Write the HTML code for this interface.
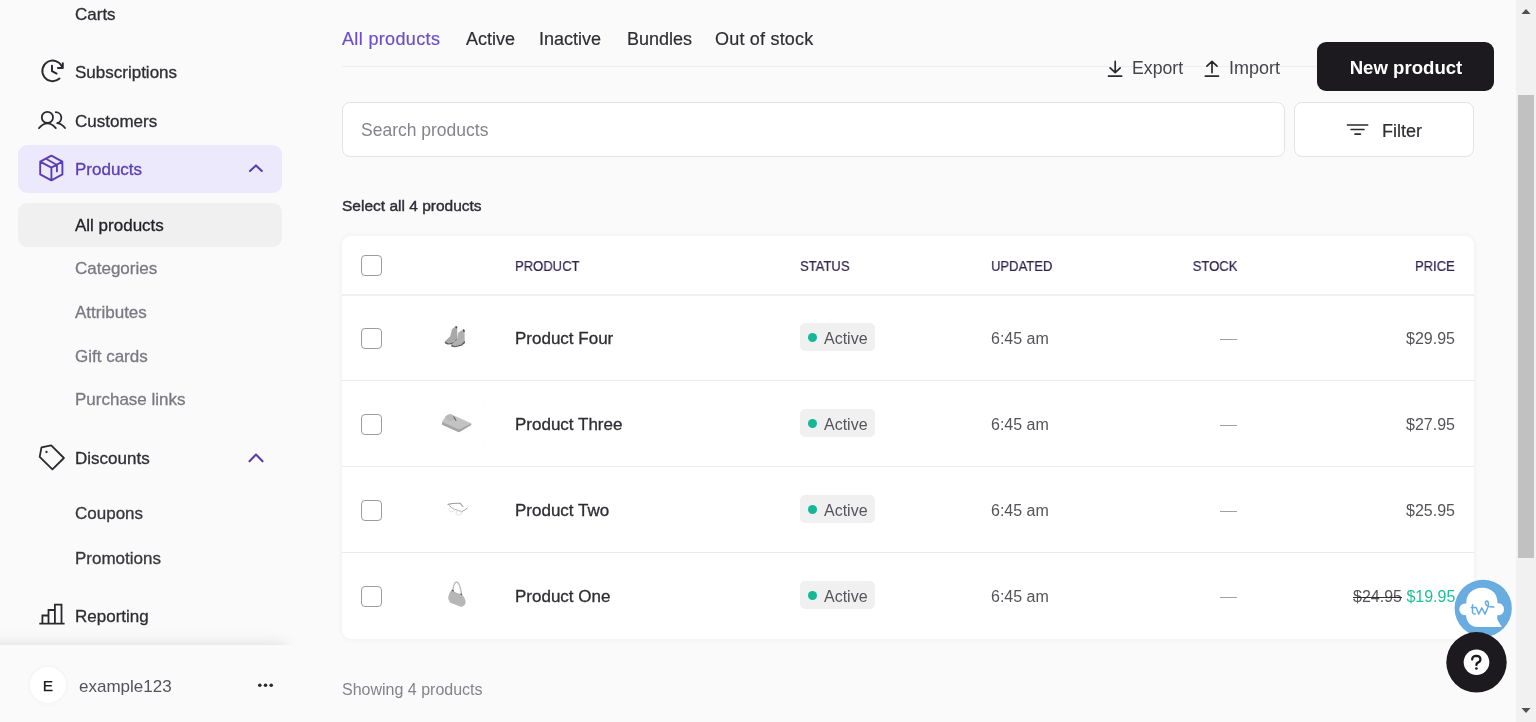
<!DOCTYPE html>
<html><head><meta charset="utf-8"><style>
html,body{margin:0;padding:0;}
body{width:1536px;height:722px;overflow:hidden;background:#fafafa;position:relative;font-family:"Liberation Sans",sans-serif;-webkit-font-smoothing:antialiased;}
.t{position:absolute;line-height:1;white-space:nowrap;will-change:transform;}
.box{position:absolute;box-sizing:border-box;}
.cb{position:absolute;left:361.2px;width:21px;height:21px;box-sizing:border-box;border:1.5px solid #9c9ba1;border-radius:4px;background:#fff;}
.thumb{position:absolute;left:429px;width:56px;height:56px;box-sizing:border-box;border:1px solid #fefefe;border-radius:10px;}
.badge{position:absolute;left:800px;width:75px;height:28px;background:#f0f0f0;border-radius:5px;}
.badge i{position:absolute;left:8px;top:10.3px;width:9px;height:9px;border-radius:50%;background:#14b897;}
.dash{position:absolute;left:1220px;width:17px;height:1.2px;background:#a09fa6;}
.rowline{position:absolute;left:342px;width:1132px;height:1.3px;background:#ebebeb;}
</style></head><body>
<!-- sidebar highlights -->
<div class="box" style="left:18px;top:145px;width:264px;height:48px;background:#ece9fd;border-radius:9px;"></div>
<div class="box" style="left:18px;top:202.5px;width:264px;height:44px;background:#f0f0f0;border-radius:9px;"></div>
<!-- footer shadow -->
<div class="box" style="left:0;top:620px;width:320px;height:25px;overflow:hidden;"><div class="box" style="left:-30px;top:25px;width:316px;height:100px;box-shadow:0 0 15px rgba(0,0,0,0.13);"></div></div>
<div class="box" style="left:30.3px;top:666.8px;width:36px;height:36px;border-radius:50%;background:#fff;box-shadow:0 0 4px rgba(0,0,0,0.06);"></div>
<!-- tabs line -->
<div class="box" style="left:342px;top:65.6px;width:1132px;height:1.2px;background:#eeeeee;"></div>
<!-- new product -->
<div class="box" style="left:1317px;top:42px;width:177px;height:49px;background:#1c1a1f;border-radius:9px;"></div>
<!-- search -->
<div class="box" style="left:342px;top:102px;width:943px;height:55px;background:#fff;border:1px solid #e3e3e3;border-radius:8px;"></div>
<div class="box" style="left:1294px;top:102px;width:180px;height:55px;background:#fff;border:1px solid #e3e3e3;border-radius:8px;"></div>
<!-- card -->
<div class="box" style="left:342px;top:236px;width:1132px;height:402.5px;background:#fff;border-radius:9px;box-shadow:0 0 6px rgba(0,0,0,0.05);"></div>
<div class="box" style="left:342px;top:294px;width:1132px;height:2px;background:#efefef;"></div>
<div class="cb" style="top:255px"></div>
<div class="cb" style="top:327.5px"></div><div class="thumb" style="top:310.0px"></div><div class="badge" style="top:323.0px"><i></i></div><div class="dash" style="top:338.5px"></div><div class="cb" style="top:413.5px"></div><div class="thumb" style="top:396.0px"></div><div class="badge" style="top:409.0px"><i></i></div><div class="dash" style="top:424.5px"></div><div class="rowline" style="top:380.0px"></div><div class="cb" style="top:499.5px"></div><div class="thumb" style="top:482.0px"></div><div class="badge" style="top:495.0px"><i></i></div><div class="dash" style="top:510.5px"></div><div class="rowline" style="top:466.0px"></div><div class="cb" style="top:585.5px"></div><div class="thumb" style="top:568.0px"></div><div class="badge" style="top:581.0px"><i></i></div><div class="dash" style="top:596.5px"></div><div class="rowline" style="top:552.0px"></div>
<div class="t" style="left:74.5px;top:5.61px;font-size:17px;color:#2e2d33;font-weight:normal;-webkit-text-stroke:0.3px #2e2d33;">Carts</div><div class="t" style="left:74.5px;top:64.11px;font-size:17px;color:#2e2d33;font-weight:normal;-webkit-text-stroke:0.3px #2e2d33;">Subscriptions</div><div class="t" style="left:74.5px;top:112.61px;font-size:17px;color:#2e2d33;font-weight:normal;-webkit-text-stroke:0.3px #2e2d33;">Customers</div><div class="t" style="left:74.5px;top:161.21px;font-size:17px;color:#5b3db3;font-weight:normal;-webkit-text-stroke:0.3px #5b3db3;">Products</div><div class="t" style="left:74.5px;top:217.01px;font-size:17px;color:#222126;font-weight:normal;-webkit-text-stroke:0.3px #222126;">All products</div><div class="t" style="left:74.5px;top:259.61px;font-size:17px;color:#7a7982;font-weight:normal;-webkit-text-stroke:0.3px #7a7982;">Categories</div><div class="t" style="left:74.5px;top:304.01px;font-size:17px;color:#7a7982;font-weight:normal;-webkit-text-stroke:0.3px #7a7982;">Attributes</div><div class="t" style="left:74.5px;top:348.01px;font-size:17px;color:#7a7982;font-weight:normal;-webkit-text-stroke:0.3px #7a7982;">Gift cards</div><div class="t" style="left:74.5px;top:391.41px;font-size:17px;color:#7a7982;font-weight:normal;-webkit-text-stroke:0.3px #7a7982;">Purchase links</div><div class="t" style="left:74.5px;top:449.81px;font-size:17px;color:#2e2d33;font-weight:normal;-webkit-text-stroke:0.3px #2e2d33;">Discounts</div><div class="t" style="left:74.5px;top:505.21px;font-size:17px;color:#38373c;font-weight:normal;-webkit-text-stroke:0.3px #38373c;">Coupons</div><div class="t" style="left:74.5px;top:549.61px;font-size:17px;color:#38373c;font-weight:normal;-webkit-text-stroke:0.3px #38373c;">Promotions</div><div class="t" style="left:74.5px;top:608.01px;font-size:17px;color:#2e2d33;font-weight:normal;-webkit-text-stroke:0.3px #2e2d33;">Reporting</div><div class="t" style="left:79.0px;top:677.51px;font-size:17px;color:#55545a;font-weight:normal;">example123</div><div class="t" style="left:-252.0px;width:600px;text-align:center;top:678.38px;font-size:15.5px;color:#1d1b22;font-weight:normal;-webkit-text-stroke:0.25px #1d1b22;">E</div><div class="t" style="left:342.0px;top:30.26px;font-size:18px;color:#6b4fc8;font-weight:normal;-webkit-text-stroke:0.2px #6b4fc8;letter-spacing:0.35px;">All products</div><div class="t" style="left:465.5px;top:30.26px;font-size:18px;color:#2e2d33;font-weight:normal;-webkit-text-stroke:0.2px #2e2d33;">Active</div><div class="t" style="left:539.0px;top:30.26px;font-size:18px;color:#2e2d33;font-weight:normal;-webkit-text-stroke:0.2px #2e2d33;">Inactive</div><div class="t" style="left:627.0px;top:30.26px;font-size:18px;color:#2e2d33;font-weight:normal;-webkit-text-stroke:0.2px #2e2d33;">Bundles</div><div class="t" style="left:715.0px;top:30.26px;font-size:18px;color:#2e2d33;font-weight:normal;-webkit-text-stroke:0.2px #2e2d33;letter-spacing:0.2px;">Out of stock</div><div class="t" style="left:1131.5px;top:59.62px;font-size:17.7px;color:#45444a;font-weight:normal;">Export</div><div class="t" style="left:1228.5px;top:59.36px;font-size:18px;color:#45444a;font-weight:normal;">Import</div><div class="t" style="left:1105.7px;width:600px;text-align:center;top:59.06px;font-size:18.6px;color:#ffffff;font-weight:bold;">New product</div><div class="t" style="left:360.5px;top:122.19px;font-size:17.5px;color:#85848c;font-weight:normal;">Search products</div><div class="t" style="left:1382.0px;top:121.76px;font-size:18px;color:#2e2d33;font-weight:normal;-webkit-text-stroke:0.2px #2e2d33;">Filter</div><div class="t" style="left:342.0px;top:198.28px;font-size:15.5px;color:#2e2d33;font-weight:normal;-webkit-text-stroke:0.4px #2e2d33;">Select all 4 products</div><div class="t" style="left:515.0px;top:258.30px;font-size:15px;color:#30234f;font-weight:normal;-webkit-text-stroke:0.2px #30234f;transform:scaleX(0.87);transform-origin:left center;">PRODUCT</div><div class="t" style="left:800.0px;top:258.30px;font-size:15px;color:#30234f;font-weight:normal;-webkit-text-stroke:0.2px #30234f;transform:scaleX(0.87);transform-origin:left center;">STATUS</div><div class="t" style="left:991.0px;top:258.30px;font-size:15px;color:#30234f;font-weight:normal;-webkit-text-stroke:0.2px #30234f;transform:scaleX(0.87);transform-origin:left center;">UPDATED</div><div class="t" style="right:299.0px;top:258.30px;font-size:15px;color:#30234f;font-weight:normal;-webkit-text-stroke:0.2px #30234f;transform:scaleX(0.87);transform-origin:right center;">STOCK</div><div class="t" style="right:81.0px;top:258.30px;font-size:15px;color:#30234f;font-weight:normal;-webkit-text-stroke:0.2px #30234f;transform:scaleX(0.87);transform-origin:right center;">PRICE</div><div class="t" style="left:515.0px;top:330.11px;font-size:17px;color:#2e2d33;font-weight:normal;-webkit-text-stroke:0.3px #2e2d33;">Product Four</div><div class="t" style="left:824.0px;top:330.96px;font-size:16px;color:#55545a;font-weight:normal;">Active</div><div class="t" style="left:990.5px;top:330.96px;font-size:16px;color:#55545a;font-weight:normal;">6:45 am</div><div class="t" style="right:81.0px;top:330.96px;font-size:16px;color:#55545a;font-weight:normal;">$29.95</div><div class="t" style="left:515.0px;top:416.11px;font-size:17px;color:#2e2d33;font-weight:normal;-webkit-text-stroke:0.3px #2e2d33;">Product Three</div><div class="t" style="left:824.0px;top:416.96px;font-size:16px;color:#55545a;font-weight:normal;">Active</div><div class="t" style="left:990.5px;top:416.96px;font-size:16px;color:#55545a;font-weight:normal;">6:45 am</div><div class="t" style="right:81.0px;top:416.96px;font-size:16px;color:#55545a;font-weight:normal;">$27.95</div><div class="t" style="left:515.0px;top:502.11px;font-size:17px;color:#2e2d33;font-weight:normal;-webkit-text-stroke:0.3px #2e2d33;">Product Two</div><div class="t" style="left:824.0px;top:502.96px;font-size:16px;color:#55545a;font-weight:normal;">Active</div><div class="t" style="left:990.5px;top:502.96px;font-size:16px;color:#55545a;font-weight:normal;">6:45 am</div><div class="t" style="right:81.0px;top:502.96px;font-size:16px;color:#55545a;font-weight:normal;">$25.95</div><div class="t" style="left:515.0px;top:588.11px;font-size:17px;color:#2e2d33;font-weight:normal;-webkit-text-stroke:0.3px #2e2d33;">Product One</div><div class="t" style="left:824.0px;top:588.96px;font-size:16px;color:#55545a;font-weight:normal;">Active</div><div class="t" style="left:990.5px;top:588.96px;font-size:16px;color:#55545a;font-weight:normal;">6:45 am</div><div class="t" style="right:81.0px;top:588.96px;font-size:16px;color:#4f4e55;font-weight:normal;"><span style="text-decoration:line-through;text-decoration-color:#2e2d33;color:#55545a">$24.95</span> <span style="color:#1fbf98">$19.95</span></div><div class="t" style="left:342.0px;top:682.46px;font-size:16px;color:#84838b;font-weight:normal;">Showing 4 products</div>
<!-- scrollbar -->
<div class="box" style="left:1516px;top:0;width:20px;height:722px;background:#f1f1f1;"></div>
<div class="box" style="left:1518px;top:95px;width:16px;height:463px;background:#c1c1c1;"></div>
<svg width="1536" height="722" style="position:absolute;left:0;top:0">
<g fill="none" stroke="#2a292e" stroke-width="1.8" stroke-linecap="round" stroke-linejoin="round">
 <!-- subscriptions -->
 <g stroke-width="1.95">
 <path d="M59.5 78.6 A10.3 10.3 0 1 1 62 66.6"/>
 <path d="M62.8 63.1 V68 H57.9"/>
 <path d="M52 65.6 V71.2 L56.6 73.6"/>
 </g>
 <!-- customers -->
 <circle cx="47.4" cy="117.4" r="5.6"/>
 <path d="M39 128.1 Q47.4 118.8 55.8 128.1"/>
 <path d="M55.8 112.2 A5.6 5.6 0 0 1 57.2 123.2 Q62 123.8 65 128.1"/>
 <!-- tag -->
 <path d="M41.5 447.4 L51.2 445.4 L63.9 458 L52.4 469.4 L39.7 456.8 Z"/>
 <circle cx="46.5" cy="452" r="1.15" fill="#2a292e" stroke="none"/>
 <!-- reporting -->
 <path d="M40.2 623.7 H63.7 M42.4 623.7 V615.5 H48.5 V623.7 M48.5 610 H54.9 V623.7 M54.9 604.6 H61.5 V623.7 M48.5 623.7 V610 M54.9 623.7 V604.6" stroke-linecap="square" stroke-linejoin="miter"/>
 <!-- export/import -->
 <path d="M1115.2 61.4 V72.6 M1110.1 67.8 L1115.2 72.6 L1120.2 67.8 M1108.5 76.1 H1121.7" stroke-width="1.7"/>
 <path d="M1212 72.6 V61.4 M1206.9 66.2 L1212 61.4 L1217 66.2 M1205.3 76.1 H1218.5" stroke-width="1.7"/>
 <!-- filter -->
 <path d="M1347.5 125 H1367.6 M1351.2 129.5 H1363.9 M1355 134.1 H1360.4" stroke-width="1.7"/>
</g>
<g fill="none" stroke="#5b3db3" stroke-width="1.9" stroke-linecap="round" stroke-linejoin="round">
 <path d="M51.4 155.7 L62.4 161.7 V174.4 L51.4 180.4 L40.2 174.4 V161.7 Z M40.2 161.7 L51.4 167.7 L62.4 161.7 M51.4 167.7 V180.4 M46.5 159 L56.9 165 V171.4"/>
 <path d="M250 171 L256 165.4 L261.8 171" stroke-width="2.1"/>
 <path d="M249.5 461.3 L256 454.5 L262.5 461.3" stroke-width="2.1"/>
</g>
<!-- dots -->
<g fill="#2a292e"><circle cx="259.8" cy="685.3" r="1.8"/><circle cx="265.5" cy="685.3" r="1.8"/><circle cx="271.2" cy="685.3" r="1.8"/></g>
<!-- scrollbar arrows -->
<path d="M1521.5 14 L1526 9 L1530.5 14 Z" fill="#505050"/>
<path d="M1521.5 708 L1526 713 L1530.5 708 Z" fill="#505050"/>
<!-- thumbnails -->
<g stroke="none">
 <path d="M455.5 326.2 L457.2 327 L457.3 337.8 L455.8 340.5 L448.5 343.8 L445.3 343.3 L444.8 341.6 L450.2 336.2 L452 329.2 Z" fill="#a9a9a9"/>
 <path d="M445 341.8 L449 343.6 L454.5 341.5 L456.8 338.5 L457 341 L453 344.2 L447.5 344.4 L444.6 343 Z" fill="#5a5a5a"/>
 <path d="M463 329.4 L464.6 330.3 L464.7 341 L462.5 343.8 L455.5 346.6 L451.8 346.2 L451.2 344.6 L456.8 339.8 L458.4 332.5 Z" fill="#b0b0b0"/>
 <path d="M451.5 344.7 L455 346.2 L461.5 344.2 L464.7 340.8 L465 343 L461.5 345.8 L455 347.2 L451.2 346.5 Z" fill="#5a5a5a"/>
 <path d="M455.6 325.9 L457.2 326.5 L457.2 328.6 L455.6 328 Z M463 329.2 L464.6 329.8 L464.6 332 L463 331.4 Z" fill="#4a4a4a"/>
 <path d="M442.2 421.5 L445.5 416.5 Q448 414 451 414.2 L471.2 423.3 L471.2 425 L459 432.3 L442.2 424.8 Z" fill="#c3c3c3"/>
 <path d="M442.2 422 L459 429.5 L471.2 423.5 L471.2 425 L459 432.3 L442.2 424.8 Z" fill="#a5a5a5"/>
 <path d="M445.5 416.5 Q448 413.8 451.2 414.2 Q453.5 415 455.7 419.8 L450 421 Q446 420 445.5 416.5 Z" fill="#b9b9b9"/>
 <path d="M453.5 416.5 L456.2 420.6" stroke="#6a6a6a" stroke-width="1.2"/>
 <path d="M452.7 590.8 Q454 581.5 456.8 582 Q459.8 582.5 461.5 594.2" fill="none" stroke="#bdbdbd" stroke-width="1.4"/>
 <path d="M451.9 590.2 Q456 593 461.6 594.2 Q465.8 598 465.6 603 Q464 607 460.8 606.8 L450.3 602.8 Q447.8 599 448.3 597 Q449.2 592 451.9 590.2 Z" fill="#b7b7b7"/>
 <path d="M451.8 590 L453.8 591.3 M460.5 593.8 L462 594.8" stroke="#555" stroke-width="1.1"/>
</g>
<g fill="none" stroke-linecap="round">
 <path d="M448 504.4 Q454 502.8 460.2 503.3 L462.9 506.5" stroke="#9a9a9a" stroke-width="1.1"/>
 <path d="M449.5 505.6 Q451.5 508.5 454.7 509.3 Q458.5 510.5 461.7 511.7 Q465 510 467.5 508" stroke="#a8a8a8" stroke-width="1"/>
 <ellipse cx="451.6" cy="509.6" rx="2.6" ry="2.2" stroke="#dedede" stroke-width="0.8"/>
 <ellipse cx="458.8" cy="513" rx="2.8" ry="2.2" stroke="#dedede" stroke-width="0.8"/>
</g>
<!-- floating -->
<circle cx="1483.2" cy="608.3" r="28.6" fill="#69ade0"/>
<path d="M1466.3 603.5 Q1466 597 1470 592.5 Q1475 587.8 1482.2 587.8 Q1489.5 587.8 1494 592.5 Q1497.5 596.5 1497.5 603.3 Q1500 603 1502 604.5 Q1504 606.5 1504 609.5 Q1504 612.5 1502 614 Q1500 615.5 1497.3 615.3 L1497.3 619.5 L1501.8 626.9 L1477 626.9 Q1470 626.5 1467.5 621 Q1466 618.5 1466 615.3 Q1462.5 615.5 1460.8 613.5 Q1459.2 611.5 1459.3 609.3 Q1459.5 606 1461.5 604.8 Q1463.5 603.3 1466.3 603.5 Z" fill="#fff"/>
<g fill="none" stroke="#69ade0" stroke-width="1.5" stroke-linecap="round" stroke-linejoin="round">
 <path d="M1472.5 604.8 V612.3 Q1472.8 614.2 1475.3 614.1 M1471.2 607.5 H1476"/>
 <path d="M1476.4 607.9 L1478.7 614.1 L1481.8 607.9 L1485 614.1 L1488.2 606.5 Q1489.2 602 1487 601 Q1485.2 600.8 1485.5 603.5 Q1486.5 607 1493.9 607.1"/>
</g>
<circle cx="1476.5" cy="662.3" r="30.2" fill="#1c1a1f"/>
<circle cx="1476.5" cy="662.3" r="12.8" fill="#fff"/>
<path d="M1472.2 659.4 Q1472.4 655.9 1476.4 655.9 Q1480.4 656 1480.4 659.4 Q1480.4 661.5 1477.8 662.6 Q1476.4 663.3 1476.4 665" fill="none" stroke="#1c1a1f" stroke-width="2.3" stroke-linecap="round"/>
<circle cx="1476.4" cy="668.5" r="1.35" fill="#1c1a1f"/>
</svg>
</body></html>
